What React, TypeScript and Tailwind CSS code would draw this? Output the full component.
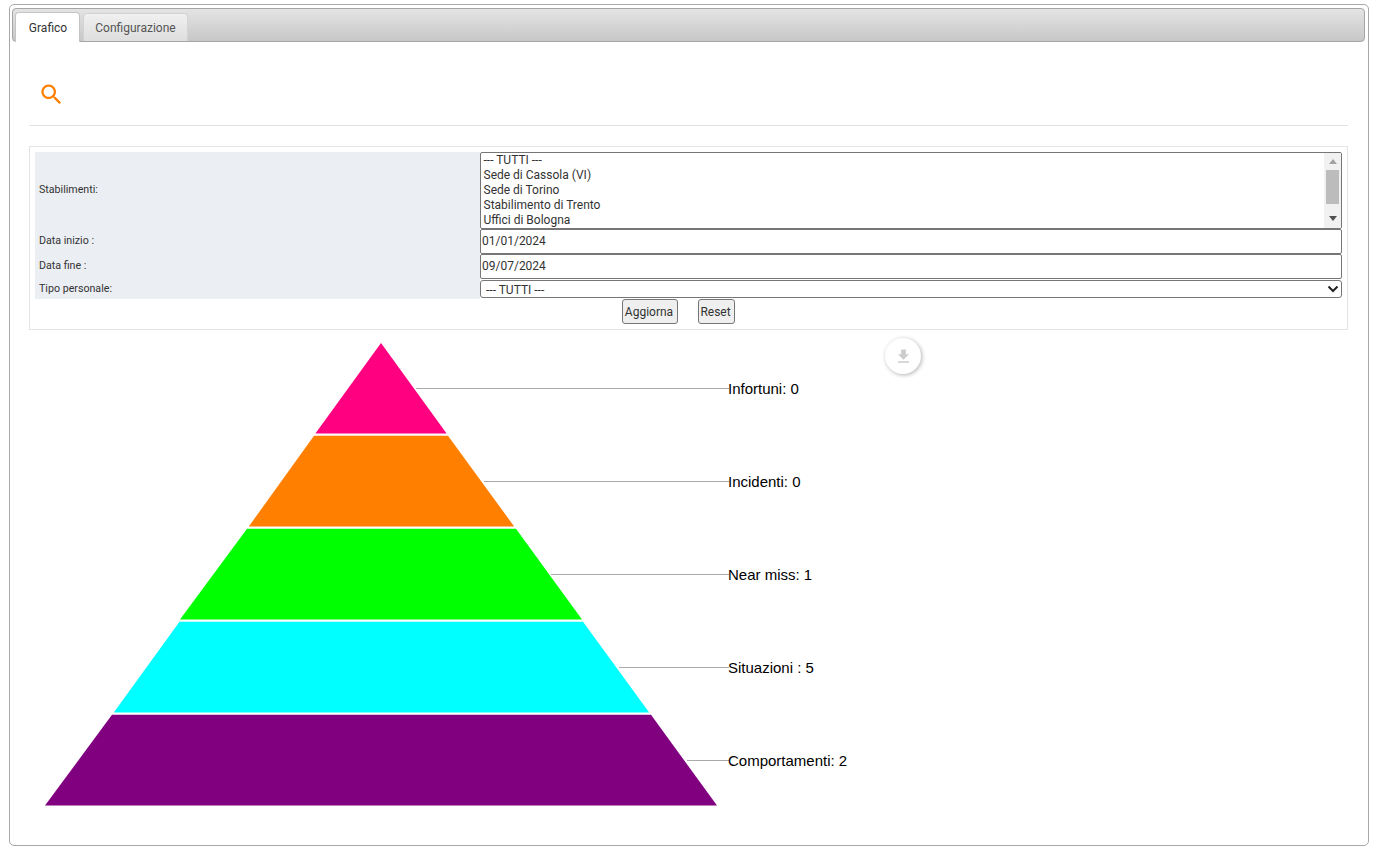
const SLICES = [
  { points: '381,343 446.6,433.5 315.4,433.5', fill: '#ff0080' },
  { points: '314,435.7 448,435.7 514.2,526.5 248.8,526.5', fill: '#ff8000' },
  { points: '247,528.7 516,528.7 582,619.5 180,619.5', fill: '#00ff00' },
  { points: '179.5,621.7 583,621.7 649.2,712.5 113.8,712.5', fill: '#00ffff' },
  { points: '112,714.7 651,714.7 717,805.6 45,805.6', fill: '#800080' },
];

const LABELS = [
  { y: 388.5, x1: 416, text: 'Infortuni: 0' },
  { y: 481.5, x1: 484, text: 'Incidenti: 0' },
  { y: 574.5, x1: 551, text: 'Near miss: 1' },
  { y: 667.5, x1: 619, text: 'Situazioni : 5' },
  { y: 760.5, x1: 687, text: 'Comportamenti: 2' },
];

const STABILIMENTI = [
  '--- TUTTI ---',
  'Sede di Cassola (VI)',
  'Sede di Torino',
  'Stabilimento di Trento',
  'Uffici di Bologna',
];

const labelCell = 'bg-[#ebeef3] flex items-center pl-[4px] pb-[2px] text-[10.67px] text-[#333]';
const dateInput = 'block h-[25px] w-full border border-[#767676] rounded-[2px] pl-[1px] pb-[2px] text-[12px] text-[#333] bg-white outline-none';

function Pyramid() {
  // svg coordinates are the page ones, shifted by the block's origin
  return (
    <svg width="1319" height="500" viewBox="29 330 1319 500" className="block">
      {SLICES.map(s => (
        <polygon key={s.fill} points={s.points} fill={s.fill} />
      ))}
      {LABELS.map(l => (
        <g key={l.text}>
          <line x1={l.x1} x2="729" y1={l.y} y2={l.y} stroke="#aaaaaa" strokeWidth="1" />
          <text x="728" y={l.y + 5} fontSize="15" fill="#000" fontFamily="'Liberation Sans', Arial, sans-serif">
            {l.text}
          </text>
        </g>
      ))}
    </svg>
  );
}

function ListScrollbar() {
  return (
    <div className="w-[17px] bg-[#f1f1f1] flex flex-col items-center shrink-0">
      <div className="h-[17px] w-full flex items-center justify-center">
        <svg width="8" height="5" viewBox="0 0 8 5"><path d="M4 0 L8 5 L0 5 Z" fill="#a3a3a3" /></svg>
      </div>
      <div className="h-[34px] w-[13px] bg-[#bcbcbc]" />
      <div className="flex-1 w-full flex items-end justify-center pb-[7px]">
        <svg width="8" height="5" viewBox="0 0 8 5"><path d="M0 0 L8 0 L4 5 Z" fill="#505050" /></svg>
      </div>
    </div>
  );
}

export default function App() {
  return (
    <div className="h-[854px] w-[1377px] pt-[4px] pl-[9px] bg-white font-['Roboto',sans-serif]">
      <div className="h-[842px] w-[1360px] border border-[#a8a8a8] rounded-[5px] pt-[3px] px-[2px] bg-white">
        {/* Tabs */}
        <div className="h-[34px] w-[1353px] border border-[#a6a6a6] rounded-[4px] bg-gradient-to-b from-[#e4e4e4] to-[#c7c7c7] flex items-end pl-[2px] gap-[3px]">
          <div className="h-[30px] w-[65px] mb-[-1px] pl-[1px] bg-white border border-[#c5c5c5] border-b-0 rounded-t-[4px] flex items-center justify-center text-[12px] text-[#333]">
            Grafico
          </div>
          <div className="h-[28px] w-[105px] bg-gradient-to-b from-[#f0f0f0] to-[#dedede] border border-[#d3d3d3] border-b-0 rounded-t-[4px] flex items-center justify-center text-[12px] text-[#555]">
            Configurazione
          </div>
        </div>

        <div className="pl-[17px] w-[1336px]">
          {/* Search toggle */}
          <div className="h-[84px] border-b border-[#e2e2e2] pt-[39px] pl-[9px]">
            <svg width="27" height="27" viewBox="0 0 24 24" fill="#ff7f00" className="block">
              <path d="M15.5 14h-.79l-.28-.27C15.41 12.59 16 11.11 16 9.5 16 5.91 13.09 3 9.5 3S3 5.91 3 9.5 5.91 16 9.5 16c1.61 0 3.09-.59 4.23-1.57l.27.28v.79l5 4.99L20.49 19l-4.99-5zm-6 0C7.01 14 5 11.99 5 9.5S7.01 5 9.5 5 14 7.01 14 9.5 11.99 14 9.5 14z" />
            </svg>
          </div>

          {/* Filters */}
          <div className="mt-[20px] h-[184px] w-[1319px] border border-[#e4e4e4] pt-[5px] pl-[5px]">
            <div className="grid grid-cols-[445px_862px] grid-rows-[77px_25px_25px_20px]">
              <div className={labelCell}>Stabilimenti:</div>
              <div className="h-[77px] w-full border border-[#767676] rounded-[2px] bg-white flex overflow-hidden">
                <div className="flex-1 pl-[2.5px] text-[12px] leading-[15px] text-[#333]">
                  {STABILIMENTI.map(s => (
                    <div key={s} className="h-[15px]">{s}</div>
                  ))}
                </div>
                <ListScrollbar />
              </div>

              <div className={labelCell}>Data inizio :</div>
              <input type="text" defaultValue="01/01/2024" className={dateInput} />

              <div className={labelCell}>Data fine :</div>
              <input type="text" defaultValue="09/07/2024" className={dateInput} />

              <div className="bg-[#ebeef3] flex items-center pl-[4px] text-[10.67px] text-[#333]">Tipo personale:</div>
              <div className="relative h-[20px] pt-[1px]">
                <select className="block h-[18px] w-full appearance-none border border-[#767676] rounded-[3px] pl-[5px] text-[12px] text-[#333] bg-white outline-none">
                  <option>--- TUTTI ---</option>
                </select>
                <svg width="12" height="8" viewBox="0 0 12 8" className="absolute right-[3px] top-[6px] pointer-events-none">
                  <path d="M1.5 1.5 L6 6 L10.5 1.5" fill="none" stroke="#222" strokeWidth="2" />
                </svg>
              </div>
            </div>
            <div className="flex justify-center gap-[20px] pr-[25px]">
              <button className="h-[25px] w-[56px] pr-[2px] border border-[#767676] rounded-[3px] bg-[#efefef] text-[12px] text-[#333]">Aggiorna</button>
              <button className="h-[25px] w-[37px] pr-[2px] border border-[#767676] rounded-[3px] bg-[#efefef] text-[12px] text-[#333]">Reset</button>
            </div>
          </div>

          {/* Chart */}
          <div className="relative">
            <Pyramid />
            <button className="absolute left-[856px] top-[8px] h-[36px] w-[36px] rounded-full bg-white shadow-[1px_1px_4px_rgba(0,0,0,0.3)] flex items-center justify-center">
              <svg width="19" height="19" viewBox="0 0 24 24" fill="#cccccc">
                <path d="M19 9h-4V3H9v6H5l7 7 7-7zM5 18v2h14v-2H5z" />
              </svg>
            </button>
          </div>
        </div>
      </div>
    </div>
  );
}
